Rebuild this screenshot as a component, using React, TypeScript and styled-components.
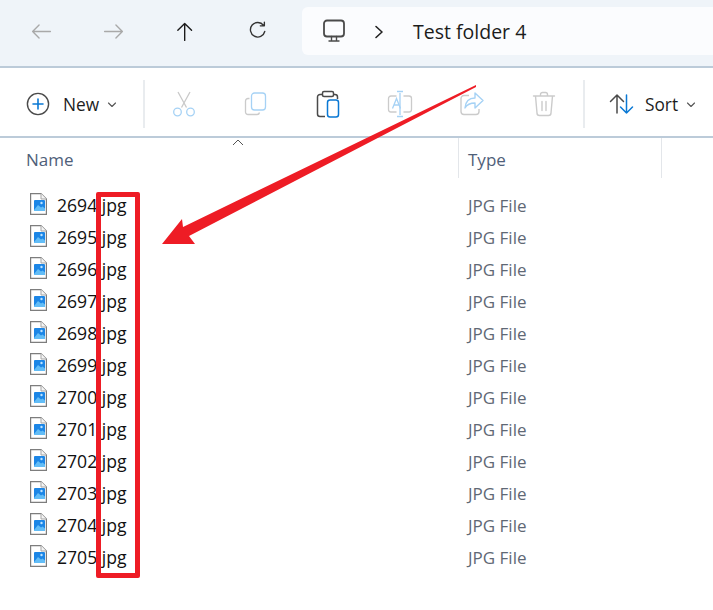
import React from "react";
import styled, { createGlobalStyle } from "styled-components";

const Global = createGlobalStyle`
  html, body { margin: 0; padding: 0; background: #fff; }
  body { font-family: "Open Sans", "Noto Sans", "Liberation Sans", sans-serif; overflow: hidden; }
`;

const Page = styled.div`
  position: relative;
  width: 713px;
  height: 610px;
  overflow: hidden;
  background: #fff;
`;

const NavBar = styled.div`
  display: flex;
  align-items: flex-start;
  background: #eff4f9;
  border-bottom: 2px solid #bccbd9;
  padding-left: 5px;
  padding-top: 7px;
  height: 59px;
`;

const NavButton = styled.div`
  width: 72px;
  height: 48px;
  display: flex;
  align-items: center;
  justify-content: center;
  flex: none;
`;

const AddressBar = styled.div`
  flex: 1;
  height: 48px;
  margin-left: 9px;
  background: #fbfcfe;
  border-radius: 6px 0 0 6px;
  display: flex;
  align-items: center;
  padding-left: 19px;
`;

const Crumb = styled.span`
  font-size: 19.5px;
  color: #1c1c1c;
  margin-left: 28px;
`;

const Chevron = styled.span`
  display: flex;
  margin-left: 26px;
  margin-top: 2px;
`;

const Toolbar = styled.div`
  display: flex;
  align-items: center;
  height: 64px;
  padding-top: 4px;
  border-bottom: 2px solid #bccbd9;
  padding-left: 26px;
`;

const NewButton = styled.div`
  display: flex;
  align-items: center;
  width: 117px;
  flex: none;
`;

const Label = styled.span`
  font-size: 17.3px;
  color: #1c1c1c;
  margin-left: 13px;
`;

const Caret = styled.span`
  display: flex;
  margin-left: 8px;
  margin-top: 1px;
`;

const Divider = styled.div`
  width: 2px;
  height: 48px;
  background: #e9ecef;
  flex: none;
`;

const ToolButton = styled.div`
  width: 72px;
  height: 48px;
  display: flex;
  align-items: center;
  justify-content: center;
  flex: none;
`;

const Tools = styled.div`
  display: flex;
  align-items: center;
  margin-left: 3px;
  margin-right: 3px;
`;

const SortButton = styled.div`
  display: flex;
  align-items: center;
  margin-left: 24px;
  flex: none;
`;

const SortLabel = styled(Label)`
  margin-left: 10px;
`;

const Header = styled.div`
  position: relative;
  display: grid;
  grid-template-columns: 458px 204px 1fr;
  height: 40px;
`;

const HeaderCell = styled.div<{ $divided?: boolean }>`
  display: flex;
  align-items: center;
  font-size: 17px;
  color: #4f6079;
  padding-left: ${(p) => (p.$divided ? "9px" : "26px")};
  border-left: ${(p) => (p.$divided ? "1px solid #e3e6ea" : "none")};
  border-right: ${(p) => (p.$divided ? "1px solid #e3e6ea" : "none")};
  padding-top: 2px;
  box-sizing: border-box;
`;

const SortMark = styled.svg`
  position: absolute;
  left: 232px;
  top: 1px;
`;

const List = styled.div`
  padding-top: 11px;
`;

const Row = styled.div`
  display: grid;
  grid-template-columns: 459px 1fr;
  height: 32px;
  align-items: center;
`;

const NameCell = styled.div`
  display: flex;
  align-items: center;
  padding-left: 30px;
`;

const IconSlot = styled.span`
  display: flex;
  margin-top: -2px;
`;

const FileName = styled.span`
  font-size: 17.6px;
  color: #111;
  margin-left: 10px;
`;

const TypeCell = styled.div`
  font-size: 17px;
  color: #5f6875;
  padding-left: 9px;
`;

const Highlight = styled.div`
  position: absolute;
  left: 96px;
  top: 192px;
  width: 44px;
  height: 386px;
  box-sizing: border-box;
  border: 5px solid #ee1c25;
  border-radius: 2px;
`;

const ArrowLayer = styled.svg`
  position: absolute;
  inset: 0;
`;

const Arrow = ({ d, color = "#1b1b1b" }: { d: string; color?: string }) => (
  <svg width="21" height="21" viewBox="0 0 26 26" fill="none" stroke={color} strokeWidth="1.7" strokeLinecap="round" strokeLinejoin="round">
    <path d={d} />
  </svg>
);

const Monitor = () => (
  <svg width="26" height="26" viewBox="0 0 26 26" fill="none" stroke="#4a4a4a" strokeWidth="1.8" strokeLinecap="round" strokeLinejoin="round">
    <rect x="3" y="2.5" width="20" height="16" rx="3" />
    <path d="M10.5 18.5v3.5M15.5 18.5v3.5M8 23h10" strokeWidth="1.4" />
  </svg>
);

const SmallChevron = () => (
  <svg width="10" height="8" viewBox="0 0 10 8" fill="none" stroke="#555" strokeWidth="1.1" strokeLinecap="round" strokeLinejoin="round">
    <path d="M1.5 2l3.5 3.5L8.5 2" />
  </svg>
);

const PlusCircle = () => (
  <svg width="24" height="24" viewBox="0 0 24 24" fill="none">
    <circle cx="12" cy="12" r="10.6" stroke="#4a4a4a" strokeWidth="1.4" />
    <path d="M12 7v10M7 12h10" stroke="#0a78d4" strokeWidth="1.6" strokeLinecap="round" />
  </svg>
);

const Cut = () => (
  <svg width="26" height="28" viewBox="0 0 26 28" fill="none" strokeWidth="1.3">
    <path d="M7 2l8.5 15.5M19 2L10.5 17.5" stroke="#c9c9c9" />
    <circle cx="6.5" cy="22" r="3.8" stroke="#a6d2f5" />
    <circle cx="19.5" cy="22" r="3.8" stroke="#a6d2f5" />
  </svg>
);

const Copy = () => (
  <svg width="26" height="26" viewBox="0 0 26 26" fill="none" strokeWidth="1.3">
    <path d="M6.5 7.5H5a2.5 2.5 0 0 0-2.500 2.500v11A2.500 2.500 0 0 0 5 23.500h9a2.500 2.500 0 0 0 2.500-2" stroke="#cbcbcb" />
    <rect x="8.500" y="2" width="14" height="17" rx="3" stroke="#a6d2f5" />
  </svg>
);

const Paste = () => (
  <svg width="26" height="28" viewBox="0 0 26 28" fill="none" strokeWidth="1.5">
    <path d="M7.500 4.500H5A2.500 2.500 0 0 0 2.500 7v17A2.500 2.500 0 0 0 5 26.500h5M18.500 4.500H20A2.500 2.500 0 0 1 22.500 7v2" stroke="#4a4a4a" />
    <rect x="7.500" y="1.500" width="11" height="5" rx="1.500" stroke="#4a4a4a" />
    <rect x="12.500" y="10" width="11" height="17" rx="2.500" stroke="#0a78d4" />
  </svg>
);

const Rename = () => (
  <svg width="26" height="28" viewBox="0 0 26 28" fill="none" strokeWidth="1.3">
    <path d="M9.500 6H4a2.500 2.500 0 0 0-2.500 2.500v11A2.500 2.500 0 0 0 4 22h5.500M16.500 6H22a2.500 2.500 0 0 1 2.500 2.500v11A2.500 2.500 0 0 1 22 22h-5.500" stroke="#cbcbcb" />
    <path d="M13 3v22M10 1.500h6M10 26.500h6" stroke="#a6d2f5" />
    <path d="M5.500 18.500l4-10 4 10M7 15h5" stroke="#a6d2f5" />
  </svg>
);

const Share = () => (
  <svg width="26" height="26" viewBox="0 0 26 26" fill="none" strokeWidth="1.4" strokeLinejoin="round">
    <path d="M10 4.500H5A3 3 0 0 0 2 7.500v13A3 3 0 0 0 5 23.500h12a3 3 0 0 0 3-3V18" stroke="#cbcbcb" />
    <path d="M16 2v5C10 7 6.500 10.500 6 17c2-3.500 5-5 10-5v5l8-7.500z" stroke="#a6d2f5" />
  </svg>
);

const Trash = () => (
  <svg width="24" height="26" viewBox="0 0 24 26" fill="none" stroke="#cbcbcb" strokeWidth="1.4" strokeLinecap="round" strokeLinejoin="round">
    <path d="M1.500 5h21M8.500 5V3.500a2 2 0 0 1 2-2h3a2 2 0 0 1 2 2V5M3.500 5l1.500 17a2.500 2.500 0 0 0 2.500 2.500h9a2.500 2.500 0 0 0 2.500-2.500L20.500 5M10 10.500v9M14 10.500v9" />
  </svg>
);

const SortIcon = () => (
  <svg width="26" height="22" viewBox="0 0 26 22" fill="none" strokeWidth="1.500" strokeLinecap="round" strokeLinejoin="round">
    <path d="M8 20V2M1.500 8.500L8 2l6.500 6.500" stroke="#4a4a4a" />
    <path d="M17.500 2v18M11.500 14l6 6 6-6" stroke="#0a78d4" />
  </svg>
);

const FileIcon = () => (
  <svg width="17" height="22" viewBox="0 0 17 22" fill="none">
    <path d="M0.600 0.600h10.400L16.400 6v15.400H0.600z" fill="#fff" stroke="#7d7d7d" strokeWidth="1.200" />
    <path d="M11 0.600V6h5.400" stroke="#a5a5a5" strokeWidth="1" fill="#f4f4f4" />
    <rect x="4" y="7" width="11" height="11" rx="1" fill="#1c86e6" />
    <path d="M4 17l4-5 3 2.500 1.500-1L15 15.500V18H4z" fill="#63bdf6" />
    <circle cx="11.500" cy="10" r="1.200" fill="#bfe4ff" />
  </svg>
);

const files = ["2694", "2695", "2696", "2697", "2698", "2699", "2700", "2701", "2702", "2703", "2704", "2705"];

export default function App() {
  return (
    <Page>
      <Global />
      <NavBar>
        <NavButton><Arrow color="#a9a9a9" d="M24 13H2M10 5l-8 8 8 8" /></NavButton>
        <NavButton><Arrow color="#a9a9a9" d="M2 13h22M16 5l8 8-8 8" /></NavButton>
        <NavButton><Arrow d="M12 24V3M3.500 11.500L12 3l8.500 8.500" /></NavButton>
        <NavButton><Arrow color="#333" d="M20.500 5.500A9 9 0 1 0 22 13M21.500 1.500v4.500H16.500" /></NavButton>
        <AddressBar>
          <Monitor />
          <Chevron>
            <svg width="12" height="16" viewBox="0 0 12 16" fill="none" stroke="#222" strokeWidth="1.6" strokeLinecap="round" strokeLinejoin="round">
              <path d="M3 2.500L9 8l-6 5.500" />
            </svg>
          </Chevron>
          <Crumb>Test folder 4</Crumb>
        </AddressBar>
      </NavBar>
      <Toolbar>
        <NewButton>
          <PlusCircle />
          <Label>New</Label>
          <Caret><SmallChevron /></Caret>
        </NewButton>
        <Divider />
        <Tools>
          <ToolButton><Cut /></ToolButton>
          <ToolButton><Copy /></ToolButton>
          <ToolButton><Paste /></ToolButton>
          <ToolButton><Rename /></ToolButton>
          <ToolButton><Share /></ToolButton>
          <ToolButton><Trash /></ToolButton>
        </Tools>
        <Divider />
        <SortButton>
          <SortIcon />
          <SortLabel>Sort</SortLabel>
          <Caret><SmallChevron /></Caret>
        </SortButton>
      </Toolbar>
      <Header>
        <HeaderCell>Name</HeaderCell>
        <HeaderCell $divided>Type</HeaderCell>
        <SortMark width="12" height="7" viewBox="0 0 12 7" fill="none" stroke="#555" strokeWidth="1">
          <path d="M1 6l5-5 5 5" />
        </SortMark>
      </Header>
      <List>
        {files.map((f) => (
          <Row key={f}>
            <NameCell>
              <IconSlot><FileIcon /></IconSlot>
              <FileName>{f}.jpg</FileName>
            </NameCell>
            <TypeCell>JPG File</TypeCell>
          </Row>
        ))}
      </List>
      <Highlight />
      <ArrowLayer width="713" height="610" viewBox="0 0 713 610">
        <polygon points="476,85 183,227 182,219 162,244 195,244 189,236 476,87" fill="#ee1c25" />
      </ArrowLayer>
    </Page>
  );
}
